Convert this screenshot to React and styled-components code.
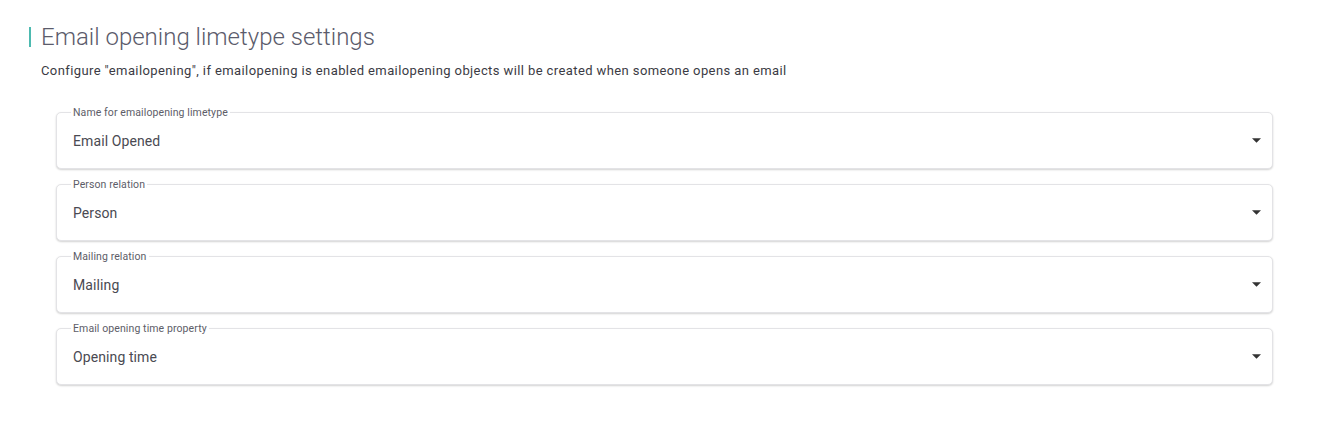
import styled, { createGlobalStyle } from "styled-components";

const GlobalStyle = createGlobalStyle`
    body {
        margin: 0;
        background: #ffffff;
        font-family: Roboto, "Noto Sans", sans-serif;
    }
`;

const fields = [
    { label: "Name for emailopening limetype", value: "Email Opened" },
    { label: "Person relation", value: "Person" },
    { label: "Mailing relation", value: "Mailing" },
    { label: "Email opening time property", value: "Opening time" },
];

const SelectField = ({ label, value }) => (
    <FieldBox>
        <FieldLabel>{label}</FieldLabel>
        <FieldValue>{value}</FieldValue>
        <Arrow viewBox="0 0 10 5">
            <path d="M0 0h10L5 5z" fill="#333" />
        </Arrow>
    </FieldBox>
);

const App = () => {
    return (
        <Page>
            <GlobalStyle />
            <Header>
                <Title>Email opening limetype settings</Title>
                <Description>
                    Configure "emailopening", if emailopening is enabled emailopening objects will be created when someone opens an email
                </Description>
            </Header>
            <FieldList>
                {fields.map((f) => (
                    <SelectField key={f.label} label={f.label} value={f.value} />
                ))}
            </FieldList>
        </Page>
    );
};

const Page = styled.div`
    padding: 27px 0 0 29px;
    width: 1323px;
    height: 430px;
    box-sizing: border-box;
`;

const Header = styled.div`
    display: flex;
    flex-direction: column;
    align-items: flex-start;
`;

const Title = styled.h1`
    margin: 0;
    padding-left: 10px;
    border-left: 2px solid #4dbab0;
    font-weight: 300;
    font-size: 24px;
    line-height: 20px;
    color: #5b5b6b;
`;

const Description = styled.p`
    margin: 16px 0 0 12px;
    font-size: 13px;
    letter-spacing: 0.4px;
    color: #3b3b44;
`;

const FieldList = styled.div`
    display: flex;
    flex-direction: column;
    gap: 15px;
    margin: 34px 0 0 27px;
    width: 1217px;
`;

const FieldBox = styled.div`
    position: relative;
    height: 57px;
    box-sizing: border-box;
    border: 1px solid #e3e3e6;
    border-radius: 5px;
    box-shadow: 0 1px 2px rgba(0, 0, 0, 0.18);
    display: flex;
    align-items: center;
    padding: 0 11px 0 16px;
    background: #fff;
`;

const FieldLabel = styled.span`
    position: absolute;
    top: -6px;
    left: 14px;
    padding: 0 2px;
    background: #fff;
    font-size: 10.5px;
    letter-spacing: 0.1px;
    line-height: 12px;
    color: #5d5d68;
`;

const FieldValue = styled.span`
    flex: 1;
    font-size: 14px;
    letter-spacing: 0.1px;
    color: #4a4a52;
`;

const Arrow = styled.svg`
    width: 9px;
    height: 5px;
`;

export default App;
